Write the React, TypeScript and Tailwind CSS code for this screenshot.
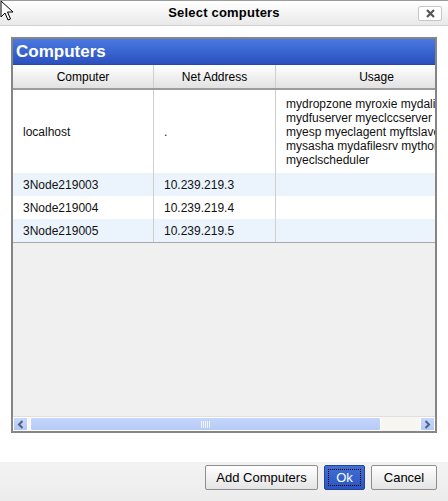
import React from 'react';

const rows = [
  {
    name: 'localhost',
    addr: '.',
    usage: ['mydropzone myroxie mydali', 'mydfuserver myeclccserver', 'myesp myeclagent myftslave', 'mysasha mydafilesrv mythor', 'myeclscheduler'],
  },
  { name: '3Node219003', addr: '10.239.219.3', usage: [] },
  { name: '3Node219004', addr: '10.239.219.4', usage: [] },
  { name: '3Node219005', addr: '10.239.219.5', usage: [] },
];

const Cursor = () => (
  <svg className="absolute left-0 top-0" width="14" height="22" viewBox="0 0 14 22">
    <path d="M1 1 L1 17 L5 13 L8 20 L10.5 19 L7.5 12 L13 12 Z" fill="#fff" stroke="#000" strokeWidth="1" strokeLinejoin="round" />
  </svg>
);

export default function App() {
  return (
    <div className="relative w-[448px] h-[501px] flex flex-col bg-white font-['Liberation_Sans',Arial,sans-serif] text-black overflow-hidden">
      {/* Title bar */}
      <div className="h-[26px] shrink-0 flex items-center justify-center relative border-t border-[#9a9a9a] border-b border-b-[#d0d0d0] bg-gradient-to-b from-[#ffffff] to-[#e9e9e9]">
        <span className="text-[13px] font-bold tracking-[0.2px]">Select computers</span>
        <button className="absolute right-[6px] top-[5px] w-[24px] h-[15px] bg-white border border-[#c6c6c6] rounded-[2px] flex items-center justify-center text-[#555]">
          <svg width="9" height="9" viewBox="0 0 9 9">
            <path d="M1 1 L8 8 M8 1 L1 8" stroke="#555" strokeWidth="2.2" />
          </svg>
        </button>
      </div>
      <Cursor />

      {/* Panel */}
      <div className="px-[11px] pt-[11px]">
        <div className="h-[396px] flex flex-col border-2 border-[#858585] overflow-hidden">
          <div className="h-[26px] shrink-0 flex items-center pl-[3px] bg-gradient-to-b from-[#4a79e2] to-[#2b50bd] border-b border-[#244aa6]">
            <span className="text-[17px] font-bold text-white leading-none">Computers</span>
          </div>

          <div className="flex-1 flex flex-col overflow-hidden bg-[#f0f0f0]">
            <div className="w-[640px] flex flex-col">
              {/* column headers */}
              <div className="h-[25px] flex bg-gradient-to-b from-[#ffffff] to-[#e2e2e2] border-b-2 border-[#9c9c9c] text-[12px]">
                <div className="w-[141px] flex items-center justify-center border-r border-[#cfcfcf]">Computer</div>
                <div className="w-[122px] flex items-center justify-center border-r border-[#cfcfcf]">Net Address</div>
                <div className="w-[202px] flex items-center justify-center border-r border-[#cfcfcf]">Usage</div>
                <div className="flex-1" />
              </div>
              {rows.map((r, i) => (
                <div
                  key={r.name}
                  className={`flex text-[12px] text-[#111] ${i % 2 === 1 ? 'bg-[#ebf3fd]' : 'bg-white'} ${i === 0 ? 'h-[83px]' : 'h-[23px]'}`}
                >
                  <div className="w-[141px] flex items-center pl-[10px] border-r border-[#cfcfcf]">{r.name}</div>
                  <div className="w-[122px] flex items-center pl-[10px] border-r border-[#cfcfcf]">{r.addr}</div>
                  <div className="w-[202px] flex flex-col justify-center pl-[10px] leading-[14px] whitespace-nowrap">
                    {r.usage.map((u) => (
                      <span key={u}>{u}</span>
                    ))}
                  </div>
                  <div className="flex-1" />
                </div>
              ))}
              <div className="border-t border-[#a8a8a8]" />
            </div>
          </div>

          {/* horizontal scrollbar */}
          <div className="h-[15px] shrink-0 flex bg-[#f7f6f1] border-t border-[#e0e0e0]">
            <div className="w-[15px] flex items-center justify-center bg-gradient-to-b from-[#c9d8fb] to-[#b3c8f5] border border-white">
              <svg width="7" height="9" viewBox="0 0 7 9">
                <path d="M5.5 1 L2 4.5 L5.5 8" stroke="#4d6185" strokeWidth="2" fill="none" />
              </svg>
            </div>
            <div className="ml-[2px] w-[351px] flex items-center justify-center bg-gradient-to-b from-[#c6d6fb] to-[#b6cbf7] border border-white rounded-[2px]">
              <svg width="9" height="7" viewBox="0 0 9 7">
                <path d="M0.5 0 V7 M2.5 0 V7 M4.5 0 V7 M6.5 0 V7 M8.5 0 V7" stroke="#eef3ff" strokeWidth="1" />
              </svg>
            </div>
            <div className="flex-1" />
            <div className="w-[15px] flex items-center justify-center bg-gradient-to-b from-[#c9d8fb] to-[#b3c8f5] border border-white">
              <svg width="7" height="9" viewBox="0 0 7 9">
                <path d="M1.5 1 L5 4.5 L1.5 8" stroke="#4d6185" strokeWidth="2" fill="none" />
              </svg>
            </div>
          </div>
        </div>
      </div>

      {/* Footer */}
      <div className="mt-auto h-[39px] shrink-0 flex items-start justify-end gap-[6px] pr-[11px] pt-[3px] bg-gradient-to-b from-[#f3f3f3] to-[#ececec]">
        <button className="w-[113px] h-[25px] text-[13px] border border-[#8e8e8e] rounded-[2px] bg-gradient-to-b from-[#ffffff] to-[#e4e4e4]">
          Add Computers
        </button>
        <button className="w-[41px] h-[25px] p-[3px] text-[13px] text-white border border-[#23449e] rounded-[2px] bg-gradient-to-b from-[#4170d6] to-[#2c54bf] flex">
          <span className="flex-1 flex items-center justify-center border border-dotted border-black">Ok</span>
        </button>
        <button className="w-[66px] h-[25px] text-[13px] border border-[#8e8e8e] rounded-[2px] bg-gradient-to-b from-[#ffffff] to-[#e4e4e4]">
          Cancel
        </button>
      </div>
    </div>
  );
}
